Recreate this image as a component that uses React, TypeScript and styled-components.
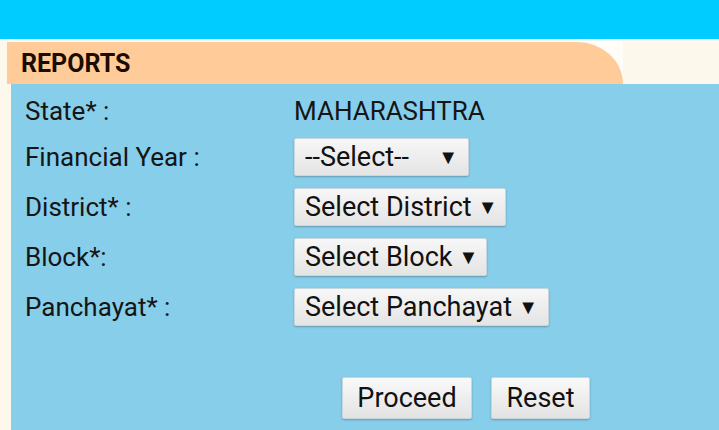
import React from "react";
import styled, { createGlobalStyle } from "styled-components";

const GlobalStyle = createGlobalStyle`
  html, body {
    margin: 0;
    padding: 0;
    background: #fdf8ec;
    font-family: Roboto, "Liberation Sans", sans-serif;
    overflow: hidden;
  }
`;

const Page = styled.div`
  width: 719px;
  height: 430px;
  display: flex;
  flex-direction: column;
  background: #fdf8ec;
`;

const TopBar = styled.div`
  height: 39px;
  background: #00ccff;
  border-bottom: 3px solid #f6fdff;
`;

const TabRow = styled.div`
  display: flex;
  padding-left: 7px;
`;

const TabBack = styled.div`
  width: 616px;
  background: #fffdf8;
`;

const Tab = styled.div`
  height: 42px;
  background: #ffcc99;
  border-top-right-radius: 46px 42px;
  display: flex;
  align-items: center;
  padding-left: 14px;
  font-size: 25px;
  font-weight: 700;
  color: #1c0c00;
`;

const Panel = styled.div`
  flex: 1;
  margin-left: 11px;
  background: #87ceeb;
  padding: 12px 0 0 14px;
  display: flex;
  flex-direction: column;
`;

const Form = styled.div`
  display: grid;
  grid-template-columns: 269px auto;
  grid-template-rows: 30px repeat(4, 38px);
  row-gap: 12px;
  align-items: center;
`;

const Label = styled.div`
  font-size: 26px;
  color: #151515;
  white-space: nowrap;
`;

const Value = styled.div`
  font-size: 26px;
  color: #151515;
  justify-self: start;
`;

const Select = styled.div<{ $width: number }>`
  box-sizing: border-box;
  width: ${({ $width }) => $width}px;
  height: 38px;
  display: flex;
  align-items: center;
  justify-content: space-between;
  padding: 0 10px 0 10px;
  font-size: 27px;
  color: #111;
  white-space: nowrap;
  background: linear-gradient(#f7f7f7, #e4e4e4);
  border: 1px solid #c9d6dc;
  border-radius: 2px;
  box-shadow: 0 1px 2px rgba(0, 0, 0, 0.25);
`;

const Arrow = styled.span`
  font-size: 20px;
  margin-left: 6px;
  flex-shrink: 0;
`;

const Actions = styled.div`
  display: flex;
  gap: 19px;
  margin-top: 51px;
  padding-left: 317px;
`;

const Button = styled.button<{ $width: number }>`
  box-sizing: border-box;
  width: ${({ $width }) => $width}px;
  height: 42px;
  font-family: inherit;
  font-size: 27px;
  color: #111;
  background: linear-gradient(#f9f9f9, #e3e3e3);
  border: 1px solid #c9d6dc;
  border-radius: 2px;
  box-shadow: 0 1px 2px rgba(0, 0, 0, 0.25);
  padding: 0;
`;

const rows = [
  { label: "Financial Year :", value: "--Select--", width: 175 },
  { label: "District* :", value: "Select District", width: 212 },
  { label: "Block*:", value: "Select Block", width: 193 },
  { label: "Panchayat* :", value: "Select Panchayat", width: 255 },
];

export default function App() {
  return (
    <Page>
      <GlobalStyle />
      <TopBar />
      <TabRow>
        <TabBack>
          <Tab>REPORTS</Tab>
        </TabBack>
      </TabRow>
      <Panel>
        <Form>
          <Label>State* :</Label>
          <Value>MAHARASHTRA</Value>
          {rows.map((row) => (
            <React.Fragment key={row.label}>
              <Label>{row.label}</Label>
              <Select $width={row.width}>
                <span>{row.value}</span>
                <Arrow>▼</Arrow>
              </Select>
            </React.Fragment>
          ))}
        </Form>
        <Actions>
          <Button $width={130}>Proceed</Button>
          <Button $width={99}>Reset</Button>
        </Actions>
      </Panel>
    </Page>
  );
}
